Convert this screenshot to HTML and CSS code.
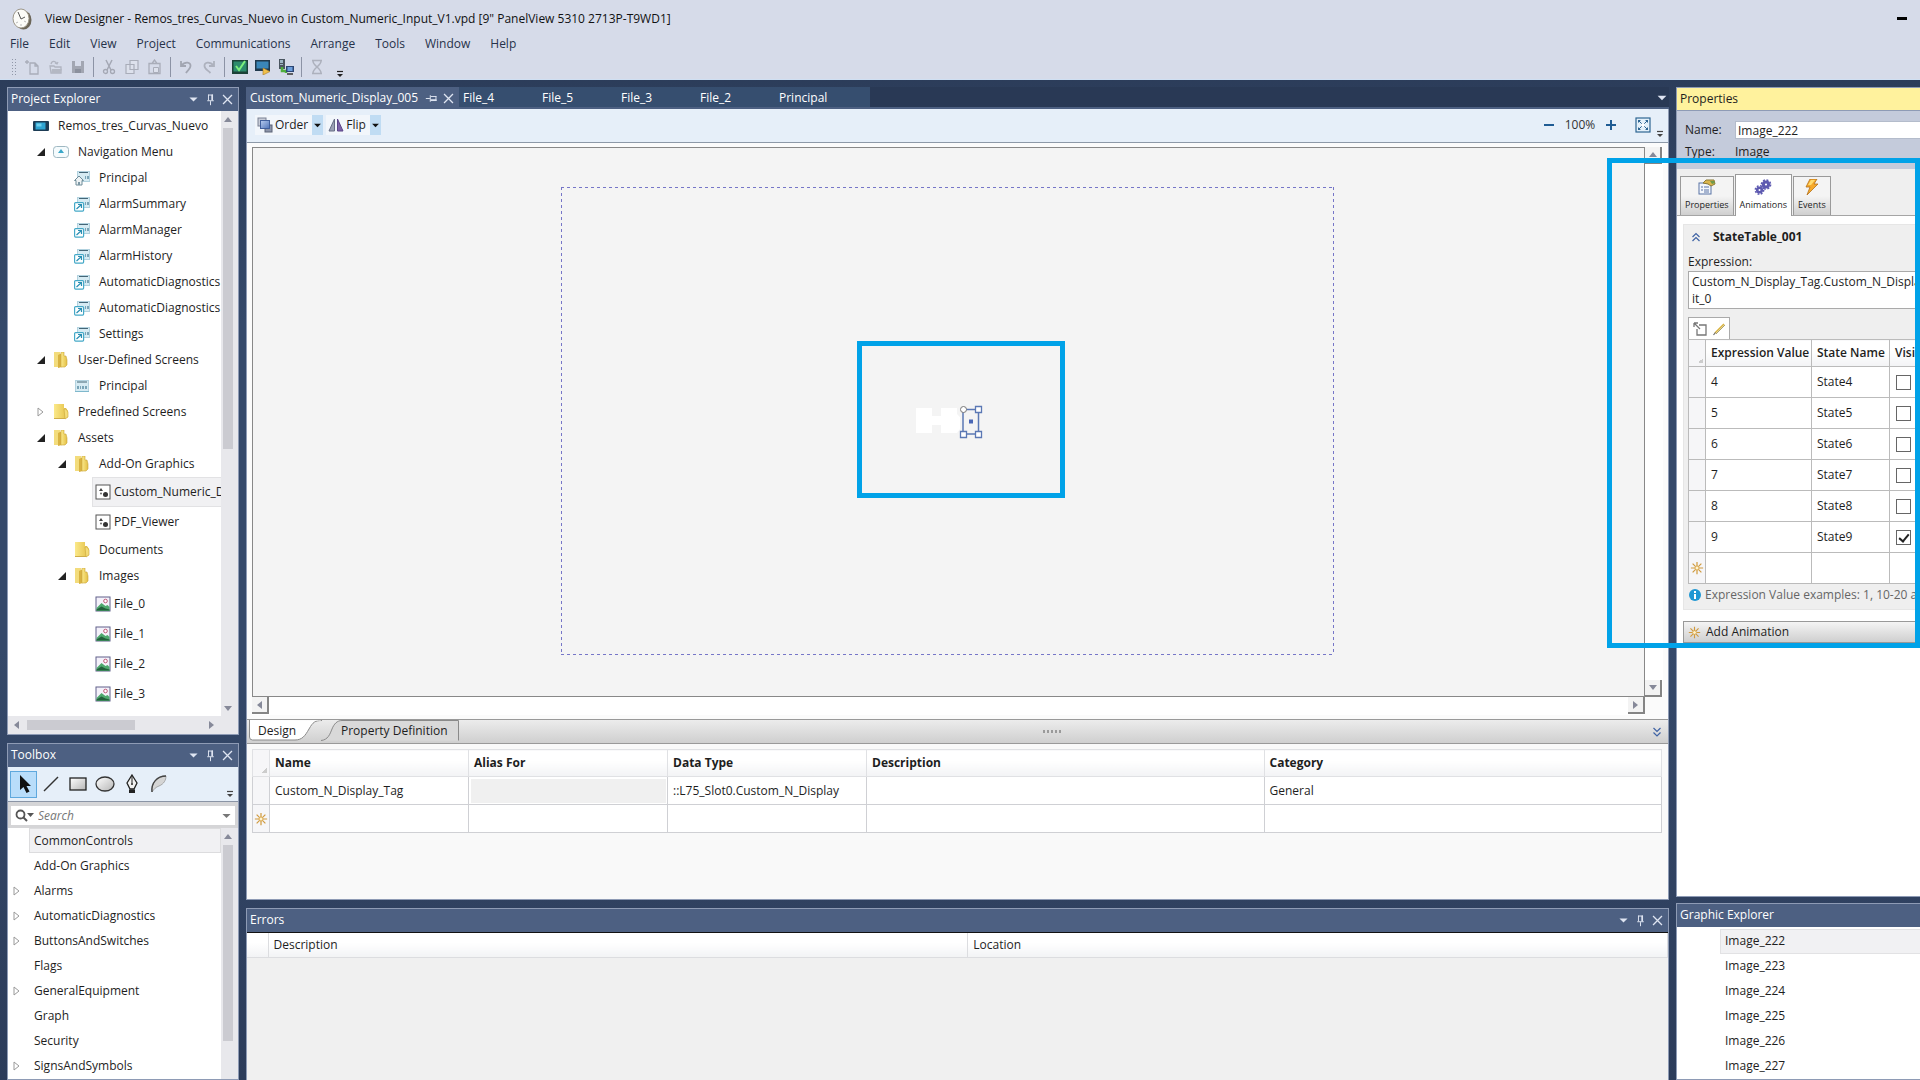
FILE: index.html
```html
<!DOCTYPE html>
<html lang="en">
<head>
<meta charset="utf-8">
<title>View Designer</title>
<link rel="stylesheet" href="styles.css">
</head>
<body>
<svg class="defs" aria-hidden="true">
  <defs>
    <linearGradient id="gFolder" x1="0" x2="1"><stop offset="0" stop-color="#fbe98a"/><stop offset="1" stop-color="#e3bf45"/></linearGradient>
    <linearGradient id="gShape" x1="0" x2="1" y1="0" y2="1"><stop offset="0" stop-color="#fff"/><stop offset="1" stop-color="#b5b5b5"/></linearGradient>
    <linearGradient id="gBlue" x1="0" x2="1" y1="0" y2="1"><stop offset="0" stop-color="#b8cdf0"/><stop offset="1" stop-color="#4f74b8"/></linearGradient>
  </defs>
  <symbol id="i-down" viewBox="0 0 16 16"><path d="M3 5.500h10l-5 5z" fill="currentColor"/></symbol>
  <symbol id="i-pin" viewBox="0 0 16 16"><path d="M5.500 2v7M10.500 2v7M5 2.500h6M4 9.500h8M8 10v5" fill="none" stroke="currentColor" stroke-width="1.200"/><path d="M9 2h2v7H9z" fill="currentColor"/></symbol>
  <symbol id="i-close" viewBox="0 0 16 16"><path d="M2.500 2.500l11 11M13.500 2.500l-11 11" stroke="currentColor" stroke-width="1.600"/></symbol>
  <symbol id="i-open" viewBox="0 0 16 16"><path d="M12 4v8H4z" fill="#222"/></symbol>
  <symbol id="i-shut" viewBox="0 0 16 16"><path d="M5 4v8l5-4z" fill="#fff" stroke="#9a9a9a"/></symbol>
  <symbol id="i-folder" viewBox="0 0 16 16"><path d="M1 0h10v4h2l2 3v6l-3 2H1z" fill="url(#gFolder)"/><path d="M11 5h2l2 3v5l-3 2z" fill="#f4dc77" stroke="#c9a63a" stroke-width=".6"/><path d="M1 14.500h11" stroke="#cfae4a"/></symbol>
  <symbol id="i-fopen" viewBox="0 0 16 16"><path d="M1 0h6v14l-2 1H1z" fill="#f3dc7c"/><path d="M5 3l4-2v14l-4 1z" fill="#d9b342"/><path d="M8 0h3v4h2l1 4v5l-2 2H8z" fill="url(#gFolder)" stroke="#c9a63a" stroke-width=".6"/></symbol>
  <symbol id="i-panel" viewBox="0 0 16 16"><rect y="3" width="16" height="10" rx="1" fill="#1d3c55"/><rect x="2.500" y="4.500" width="10" height="7" fill="#2fa5d3"/><rect x="3.500" y="5.500" width="5" height="3" fill="#6fd0ee"/></symbol>
  <symbol id="i-nav" viewBox="0 0 16 16"><rect x=".5" y="2.500" width="15" height="11" rx="3" fill="#f5fbfd" stroke="#9fb8c2"/><path d="M8 5l3 4H5z" fill="#39a7c9"/></symbol>
  <symbol id="i-screen" viewBox="0 0 16 16"><rect x="1.500" y="2.500" width="13" height="11" fill="#d6ebf3" stroke="#b2d2df"/><path d="M3 4h10" stroke="#456677"/><path d="M1 13.500h14" stroke="#7fb8cc"/><path d="M3 8h2v3H3zM6 8h1v3H6zM8 8h2v3H8zM11 8h2v3h-2z" fill="#7aa5b8"/></symbol>
  <symbol id="i-link" viewBox="0 0 16 16"><rect x="3.500" y="1.500" width="12" height="10" fill="#d6ebf3" stroke="#b2d2df"/><path d="M5 2.500h9" stroke="#456677"/><path d="M11 6h1v3h-1zM13 6h2v3h-2z" fill="#7aa5b8"/><rect x=".6" y="6.600" width="9" height="8.500" rx="1" fill="#fff" stroke="#45a9c8" stroke-width="1.200"/><path d="M2.500 13l5-4.500M4 8.500h3.500V12" fill="none" stroke="#2a8fb3" stroke-width="1.200"/></symbol>
  <symbol id="i-home" viewBox="0 0 16 16"><rect x="3.500" y="1.500" width="12" height="10" fill="#d6ebf3" stroke="#b2d2df"/><path d="M5 2.500h9" stroke="#456677"/><path d="M11 6h1v3h-1zM13 6h2v3h-2z" fill="#7aa5b8"/><path d="M.5 10.500L5 6l4.500 4.500H8V15H2v-4.500z" fill="#eef3f5" stroke="#6f8c99"/><path d="M4 12h2v3H4z" fill="#7d98a5"/></symbol>
  <symbol id="i-addon" viewBox="0 0 16 16"><rect x="1" y="1" width="14" height="14" fill="#fff" stroke="#555"/><path d="M6 4l2 3H4z" fill="#444"/><circle cx="10.500" cy="10.500" r="2.500" fill="#333"/><circle cx="6" cy="9.500" r="1" fill="#666"/></symbol>
  <symbol id="i-img" viewBox="0 0 16 16"><rect x="1" y="1" width="14" height="14" fill="#f4f1fa" stroke="#61618a"/><circle cx="10.500" cy="5" r="1.800" fill="#fff" stroke="#c05a7a"/><path d="M1.500 12l5-5 4 3 2-1 2 2V15h-13z" fill="#4ea86e"/><path d="M1.500 14.500v-1l5-3 4 2 4 1v1z" fill="#23603c"/></symbol>
  <symbol id="i-star" viewBox="0 0 16 16"><path d="M8 1v14M1 8h14M3 3l10 10M13 3L3 13" stroke="#d09a3e" stroke-width="1.400"/><circle cx="8" cy="8" r="2.300" fill="#fff3cf" stroke="#d9a74a"/></symbol>
  <symbol id="i-over" viewBox="0 0 12 12"><path d="M3 4.500h6" stroke="currentColor" stroke-width="1.200"/><path d="M3 7h6l-3 3z" fill="currentColor"/></symbol>
  <symbol id="i-up2" viewBox="0 0 12 12"><path d="M2.500 6L6 2.500 9.500 6M2.500 10L6 6.500 9.500 10" fill="none" stroke="#3f63a5" stroke-width="1.200"/></symbol>
  <symbol id="i-dn2" viewBox="0 0 12 12"><path d="M2.500 2L6 5.500 9.500 2M2.500 6.500L6 10l3.500-3.500" fill="none" stroke="#3f63a5" stroke-width="1.200"/></symbol>
</svg>

<div class="app">
  <header class="top">
    <div class="titlebar">
      <svg class="logo" viewBox="0 0 20 24"><ellipse cx="11.500" cy="13" rx="8" ry="9.500" fill="#6b6558"/><ellipse cx="9" cy="11.500" rx="8" ry="9.500" fill="#fbfbf8" stroke="#9d978a"/><path d="M9 12L6 5M9 12l4-2" stroke="#555" fill="none"/><path d="M4 16l2-1M9 19v-2M14 15l-2-1" stroke="#bbb"/></svg>
      <span class="title">View Designer - Remos_tres_Curvas_Nuevo in Custom_Numeric_Input_V1.vpd [9" PanelView 5310 2713P-T9WD1]</span>
      <button class="minimize" aria-label="Minimize"><span></span></button>
    </div>
    <nav class="menu">
      <button>File</button><button>Edit</button><button>View</button><button>Project</button><button>Communications</button><button>Arrange</button><button>Tools</button><button>Window</button><button>Help</button>
    </nav>
    <div class="tools">
      <i class="grip"></i>
      <button aria-label="New"><svg viewBox="0 0 16 16"><path d="M6 4h5l3 3v8H6zM11 4v3h3M1 3h4M3 1v4" fill="none" stroke="#a9adb9" stroke-width="1.300"/></svg></button>
      <button aria-label="Open"><svg viewBox="0 0 16 16"><path d="M3 7h4l1 1h6v6H4zM4 5c1-4 5-3 6 0M8 4l2 1 1-2" fill="none" stroke="#b0b4c0" stroke-width="1.300"/><path d="M5 10h10l-2 4H4z" fill="#b4b8c3"/></svg></button>
      <button aria-label="Save"><svg viewBox="0 0 16 16"><path d="M2 2h12v12H2z" fill="#a2a6b2"/><path d="M5 2h6v5H5z" fill="#d6dbe9"/><path d="M5 10h6v4H5z" fill="#8b909d"/></svg></button>
      <i class="sep"></i>
      <button aria-label="Cut"><svg viewBox="0 0 16 16"><path d="M5 1l5 10M11 1L6 11" stroke="#a4a8b4" stroke-width="1.500"/><circle cx="4.500" cy="12.500" r="2" fill="none" stroke="#a4a8b4" stroke-width="1.300"/><circle cx="11.500" cy="12.500" r="2" fill="none" stroke="#a4a8b4" stroke-width="1.300"/></svg></button>
      <button aria-label="Copy"><svg viewBox="0 0 16 16"><path d="M6 1.500h8v9H6zM2 5.500h8v9H2z" fill="#dde1ec" stroke="#a9adb9" stroke-width="1.200"/></svg></button>
      <button aria-label="Paste"><svg viewBox="0 0 16 16"><path d="M2 4.500h11v10H2zM5 4.500L7.500 1 10 4.500" fill="none" stroke="#a9adb9" stroke-width="1.300"/><path d="M6.500 8.500h5v5h-5z" fill="#dde1ec" stroke="#a9adb9"/></svg></button>
      <i class="sep"></i>
      <button aria-label="Undo"><svg viewBox="0 0 16 16"><path d="M3 2v5h5M3.500 6.500C7 2 13 3 12.500 7c0 3-3 4-4.500 7" fill="none" stroke="#a2a6b2" stroke-width="1.800"/></svg></button>
      <button aria-label="Redo"><svg viewBox="0 0 16 16"><path d="M13 2v5H8M12.500 6.500C9 2 3 3 3.500 7c0 3 3 4 6 7" fill="none" stroke="#adb1bd" stroke-width="1.800"/></svg></button>
      <i class="sep"></i>
      <button aria-label="Verify"><svg viewBox="0 0 16 16"><rect y="1" width="16" height="14" fill="#1c4238"/><rect x="1.500" y="2.500" width="13" height="10" fill="#2d8c6d"/><path d="M4 7l3 4 6-9" fill="none" stroke="#7df07d" stroke-width="2"/></svg></button>
      <button aria-label="Emulate"><svg viewBox="0 0 16 16"><rect y="1" width="15" height="11" fill="#20394d"/><rect x="1.500" y="2.500" width="12" height="7" fill="#3a86b8"/><path d="M8 9l7 3.500L8 16z" fill="#f0c04a" stroke="#a8792a" stroke-width=".6"/></svg></button>
      <button aria-label="Download"><svg viewBox="0 0 16 16"><path d="M1 0h6v10H1z" fill="#4a5560"/><path d="M2 1h3v3H2zM2 5h3v1H2z" fill="#9fb7c6"/><path d="M4 8v4h4v2" fill="none" stroke="#4fae3c" stroke-width="2.500"/><rect x="8" y="7" width="8" height="6" fill="#2c4674"/><rect x="9.500" y="8" width="5" height="4" fill="#6d9fdd"/><path d="M9 15h6" stroke="#333" stroke-width="1.500"/></svg></button>
      <i class="sep"></i>
      <button aria-label="Wait"><svg viewBox="0 0 16 16"><path d="M3 1.500h10M3 14.500h10M4 2c0 5 8 7 8 12M12 2c0 5-8 7-8 12" fill="none" stroke="#adb1bd" stroke-width="1.500"/></svg></button>
      <svg class="over"><use href="#i-over"/></svg>
    </div>
  </header>

  <main class="work">
    <div class="col left">
      <section class="panel explorer">
        <h2 class="head"><span>Project Explorer</span><svg><use href="#i-down"/></svg><svg><use href="#i-pin"/></svg><svg><use href="#i-close"/></svg></h2>
        <div class="scrollwrap">
          <ul class="tree">
            <li class="l0"><svg><use href="#i-panel"/></svg>Remos_tres_Curvas_Nuevo</li>
            <li class="l1"><svg class="tw"><use href="#i-open"/></svg><svg><use href="#i-nav"/></svg>Navigation Menu</li>
            <li class="l2"><svg><use href="#i-home"/></svg>Principal</li>
            <li class="l2"><svg><use href="#i-link"/></svg>AlarmSummary</li>
            <li class="l2"><svg><use href="#i-link"/></svg>AlarmManager</li>
            <li class="l2"><svg><use href="#i-link"/></svg>AlarmHistory</li>
            <li class="l2"><svg><use href="#i-link"/></svg>AutomaticDiagnostics</li>
            <li class="l2"><svg><use href="#i-link"/></svg>AutomaticDiagnostics</li>
            <li class="l2"><svg><use href="#i-link"/></svg>Settings</li>
            <li class="l1"><svg class="tw"><use href="#i-open"/></svg><svg><use href="#i-fopen"/></svg>User-Defined Screens</li>
            <li class="l2"><svg><use href="#i-screen"/></svg>Principal</li>
            <li class="l1"><svg class="tw"><use href="#i-shut"/></svg><svg><use href="#i-folder"/></svg>Predefined Screens</li>
            <li class="l1"><svg class="tw"><use href="#i-open"/></svg><svg><use href="#i-fopen"/></svg>Assets</li>
            <li class="l2"><svg class="tw"><use href="#i-open"/></svg><svg><use href="#i-fopen"/></svg>Add-On Graphics</li>
            <li class="l3"><span class="file sel"><svg><use href="#i-addon"/></svg>Custom_Numeric_D</span></li>
            <li class="l3"><span class="file"><svg><use href="#i-addon"/></svg>PDF_Viewer</span></li>
            <li class="l2"><svg><use href="#i-folder"/></svg>Documents</li>
            <li class="l2"><svg class="tw"><use href="#i-open"/></svg><svg><use href="#i-fopen"/></svg>Images</li>
            <li class="l3"><span class="file"><svg><use href="#i-img"/></svg>File_0</span></li>
            <li class="l3"><span class="file"><svg><use href="#i-img"/></svg>File_1</span></li>
            <li class="l3"><span class="file"><svg><use href="#i-img"/></svg>File_2</span></li>
            <li class="l3"><span class="file"><svg><use href="#i-img"/></svg>File_3</span></li>
          </ul>
          <div class="vbar"><i class="au"></i><b class="thumb-a"></b><i class="ad"></i></div>
        </div>
        <div class="hbar"><i class="al"></i><b></b><i class="ar"></i></div>
      </section>

      <section class="panel toolbox">
        <h2 class="head"><span>Toolbox</span><svg><use href="#i-down"/></svg><svg><use href="#i-pin"/></svg><svg><use href="#i-close"/></svg></h2>
        <div class="shapes">
          <button class="on" aria-label="Select"><svg viewBox="0 0 20 20"><path d="M6 1v15l3.500-3 3 6 3-1.500-3-5.500H17z" fill="#111"/></svg></button>
          <button aria-label="Line"><svg viewBox="0 0 20 20"><path d="M3 17L17 3" stroke="#333" stroke-width="1.400"/></svg></button>
          <button aria-label="Rectangle"><svg viewBox="0 0 20 20"><rect x="2" y="4" width="16" height="12" fill="url(#gShape)" stroke="#222" stroke-width="1.300"/></svg></button>
          <button aria-label="Ellipse"><svg viewBox="0 0 20 20"><ellipse cx="10" cy="10" rx="9" ry="7" fill="url(#gShape)" stroke="#333" stroke-width="1.300"/></svg></button>
          <button aria-label="Pen"><svg viewBox="0 0 20 20"><path d="M10 1l5 8-3 6H8L5 9z" fill="#f2f2f2" stroke="#222" stroke-width="1.300"/><path d="M10 2v7" stroke="#222"/><circle cx="10" cy="10" r="1" fill="#222"/><path d="M7 15.500h6v3.500H7z" fill="#222"/></svg></button>
          <button aria-label="Arc"><svg viewBox="0 0 20 20"><path d="M3 18C2 9 8 2 17 2c0 4-2 8-7 10-3 1-5 3-7 6z" fill="#d5d5d5" stroke="#999" stroke-width=".8"/><path d="M3 18C2 9 8 2 17 2" fill="none" stroke="#444" stroke-width="1.400"/></svg></button>
          <svg class="over"><use href="#i-over"/></svg>
        </div>
        <div class="searchrow">
          <label class="search"><svg viewBox="0 0 20 16"><circle cx="6.500" cy="6.500" r="4" fill="none" stroke="#555" stroke-width="1.800"/><path d="M9.500 9.500L13 13" stroke="#555" stroke-width="2"/><path d="M13 5h7l-3.500 4z" fill="#555"/></svg><input type="text" placeholder="Search" aria-label="Search"><svg class="drop"><use href="#i-down"/></svg></label>
        </div>
        <div class="scrollwrap">
          <ul class="cats">
            <li><span class="sel">CommonControls</span></li>
            <li><span>Add-On Graphics</span></li>
            <li><svg><use href="#i-shut"/></svg><span>Alarms</span></li>
            <li><svg><use href="#i-shut"/></svg><span>AutomaticDiagnostics</span></li>
            <li><svg><use href="#i-shut"/></svg><span>ButtonsAndSwitches</span></li>
            <li><span>Flags</span></li>
            <li><svg><use href="#i-shut"/></svg><span>GeneralEquipment</span></li>
            <li><span>Graph</span></li>
            <li><span>Security</span></li>
            <li><svg><use href="#i-shut"/></svg><span>SignsAndSymbols</span></li>
          </ul>
          <div class="vbar"><i class="au"></i><b class="thumb-b"></b></div>
        </div>
      </section>
    </div>

    <div class="col center">
      <section class="doc">
        <div class="tabs">
          <button class="tab active">Custom_Numeric_Display_005<svg class="sidepin"><use href="#i-pin"/></svg><svg><use href="#i-close"/></svg></button>
          <button class="tab">File_4</button><button class="tab">File_5</button><button class="tab">File_3</button><button class="tab">File_2</button><button class="tab last">Principal</button>
          <svg class="more"><use href="#i-down"/></svg>
        </div>
        <div class="docbar">
          <button class="cmd"><svg viewBox="0 0 16 16"><rect x="1" y="1" width="8" height="8" fill="#c9cdd8" stroke="#7a8194"/><rect x="8" y="8" width="7" height="7" fill="#8d95aa" stroke="#5b6376"/><rect x="3.500" y="3.500" width="9" height="8" fill="url(#gBlue)" stroke="#41609c"/></svg>Order</button><button class="dd" aria-label="Order options"><svg><use href="#i-down"/></svg></button>
          <button class="cmd"><svg viewBox="0 0 16 16"><path d="M6.500 2v12H1z" fill="#9aa0b4" stroke="#666d84"/><path d="M9.500 2v12H15z" fill="#7c63a8" stroke="#5b4488"/></svg>Flip</button><button class="dd" aria-label="Flip options"><svg><use href="#i-down"/></svg></button>
          <span class="grow"></span>
          <button class="zoom" aria-label="Zoom out"><svg viewBox="0 0 16 16"><path d="M3 8h10" stroke="#1f5c94" stroke-width="2"/></svg></button>
          <span class="pct">100%</span>
          <button class="zoom" aria-label="Zoom in"><svg viewBox="0 0 16 16"><path d="M3 8h10M8 3v10" stroke="#1f5c94" stroke-width="2"/></svg></button>
          <button class="zoom fit" aria-label="Fit"><svg viewBox="0 0 16 16"><rect x="1" y="1" width="14" height="14" fill="#e3f0fa" stroke="#2d6592" stroke-width="1.200"/><path d="M3 3h3L3 6zM13 3v3l-3-3zM3 13v-3l3 3zM13 13h-3l3-3z" fill="#2d6592"/><path d="M4 4l3 3M12 4L9 7M4 12l3-3M12 12L9 9" stroke="#2d6592"/><path d="M6.500 6.500h3v3h-3z" fill="#fff"/></svg></button>
          <svg class="over"><use href="#i-over"/></svg>
        </div>
        <div class="viewport">
          <div class="canvas">
            <div class="surface">
              <svg class="objects" viewBox="0 0 773 468">
                <path d="M355 221h16v8h9v-8h16v6l3 3v12l-3 4h-16v-8h-9v8h-16z" fill="#fff"/>
                <path d="M402 222.500h15.500V247H402z" fill="none" stroke="#5b78b4" stroke-width="1.500"/>
                <circle cx="402.500" cy="222.500" r="3" fill="#fff" stroke="#777"/>
                <path d="M414.500 219.500h6v6h-6zM399.500 244.500h6v6h-6zM414.500 244.500h6v6h-6z" fill="#fff" stroke="#5b78b4" stroke-width="1.300"/>
                <path d="M408 232.500h4v4h-4z" fill="#4a67b5"/>
              </svg>
              <div class="mark inner"></div>
            </div>
          </div>
          <div class="track v"><button aria-label="Scroll up"><i class="au"></i></button><button aria-label="Scroll down"><i class="ad"></i></button></div>
          <div class="track h"><button aria-label="Scroll left"><i class="al"></i></button><button aria-label="Scroll right"><i class="ar"></i></button></div>
        </div>
        <div class="split">
          <button class="stab design"><svg viewBox="0 0 76 21"><path d="M.5 0v17q0 3 3 3H46c7 0 10-4 14-11S66 .5 73 .5" fill="#fff" stroke="#8a8a8a"/><path d="M1 0h71" stroke="#fff"/></svg><span>Design</span></button>
          <button class="stab propdef"><svg viewBox="0 0 138 21"><path d="M0 20.500C7 20 9 14 11 9S16 .5 21 .5h116.500v20" fill="#d9d9d9" stroke="#8a8a8a"/></svg><span>Property Definition</span></button>
          <span class="dots"><i></i><i></i><i></i><i></i><i></i></span>
          <svg class="chev"><use href="#i-dn2"/></svg>
        </div>
        <div class="gridwrap">
          <table class="tags">
            <thead><tr><th class="rh corner"></th><th class="w2">Name</th><th class="w2">Alias For</th><th class="w2">Data Type</th><th class="w4">Description</th><th class="w4">Category</th></tr></thead>
            <tbody>
              <tr><td class="rh"></td><td>Custom_N_Display_Tag</td><td class="off"></td><td>::L75_Slot0.Custom_N_Display</td><td></td><td>General</td></tr>
              <tr><td class="rh"><svg><use href="#i-star"/></svg></td><td></td><td></td><td></td><td></td><td></td></tr>
            </tbody>
          </table>
        </div>
      </section>

      <section class="panel errors">
        <h2 class="head"><span>Errors</span><svg><use href="#i-down"/></svg><svg><use href="#i-pin"/></svg><svg><use href="#i-close"/></svg></h2>
        <table class="errs"><thead><tr><th class="rh"></th><th>Description</th><th>Location</th></tr></thead></table>
      </section>
    </div>

    <div class="col right">
      <section class="panel props">
        <h2 class="head focus"><span>Properties</span></h2>
        <div class="ident">
          <label for="nm">Name:</label><input id="nm" type="text" value="Image_222">
          <span>Type:</span><span>Image</span>
        </div>
        <div class="ptabs">
          <button><svg viewBox="0 0 18 16"><rect x="1" y="4" width="12" height="11" fill="#f4f7fc" stroke="#5873a4"/><path d="M3 8h2M3 11h2M6 8h5M6 11h5M6 13h5" stroke="#5873a4"/><path d="M5 4l3-3h8l1 4-4 2-3-2z" fill="#dcb64c" stroke="#8b7a37"/><path d="M12 2h4l1 2-3 1z" fill="#6e9a4b"/></svg>Properties</button>
          <button class="on"><svg viewBox="0 0 18 16"><circle cx="12" cy="5.500" r="2.600" fill="none" stroke="#5d59b0" stroke-width="3"/><circle cx="12" cy="5.500" r="4.600" fill="none" stroke="#5d59b0" stroke-width="1.500" stroke-dasharray="2 1.600"/><circle cx="5.500" cy="11" r="2.300" fill="none" stroke="#5d59b0" stroke-width="2.600"/><circle cx="5.500" cy="11" r="4.200" fill="none" stroke="#5d59b0" stroke-width="1.500" stroke-dasharray="1.800 1.500"/></svg>Animations</button>
          <button><svg viewBox="0 0 18 16"><path d="M7 0h7l-3 5h4L4 16l3-8H3z" fill="#f6a92a" stroke="#b3701c" stroke-width=".8"/><path d="M8 1h4L8 6H5z" fill="#ffdc70"/></svg>Events</button>
        </div>
        <div class="pbody">
          <div class="state">
            <h3><svg><use href="#i-up2"/></svg>StateTable_001</h3>
            <label for="ex">Expression:</label>
            <textarea id="ex" rows="2" wrap="off">Custom_N_Display_Tag.Custom_N_Displa
it_0</textarea>
            <div class="mini">
              <button aria-label="Expand"><svg viewBox="0 0 14 14"><path d="M6 3h7v10H4V7" fill="none" stroke="#777" stroke-width="1.300"/><path d="M1 1h4M1 1v4M1 1l6 6" fill="none" stroke="#777" stroke-width="1.300"/></svg></button>
              <button aria-label="Edit"><svg viewBox="0 0 14 14"><path d="M3 11L12 2" stroke="#d8b23c" stroke-width="1.600"/><path d="M1.500 13l2-2.500" stroke="#666" stroke-width="1.200"/><path d="M4 12L13 3" stroke="#8a7b35" stroke-width=".7"/></svg></button>
            </div>
            <table class="states">
              <thead><tr><th class="rh corner"></th><th>Expression Value</th><th>State Name</th><th>Visi</th></tr></thead>
              <tbody>
                <tr><td class="rh"></td><td>4</td><td>State4</td><td><input type="checkbox" aria-label="State4 visible"></td></tr>
                <tr><td class="rh"></td><td>5</td><td>State5</td><td><input type="checkbox" aria-label="State5 visible"></td></tr>
                <tr><td class="rh"></td><td>6</td><td>State6</td><td><input type="checkbox" aria-label="State6 visible"></td></tr>
                <tr><td class="rh"></td><td>7</td><td>State7</td><td><input type="checkbox" aria-label="State7 visible"></td></tr>
                <tr><td class="rh"></td><td>8</td><td>State8</td><td><input type="checkbox" aria-label="State8 visible"></td></tr>
                <tr><td class="rh"></td><td>9</td><td>State9</td><td><input type="checkbox" checked aria-label="State9 visible"></td></tr>
                <tr><td class="rh"><svg><use href="#i-star"/></svg></td><td></td><td></td><td></td></tr>
              </tbody>
            </table>
            <p class="hint"><svg viewBox="0 0 14 14"><circle cx="7" cy="7" r="6" fill="#1f97d3"/><path d="M7 6v5M7 3v2" stroke="#fff" stroke-width="2"/></svg>Expression Value examples: 1, 10-20 an</p>
          </div>
          <button class="add"><svg><use href="#i-star"/></svg>Add Animation</button>
        </div>
      </section>
      <section class="panel graphic">
        <h2 class="head"><span>Graphic Explorer</span></h2>
        <ul class="gfx"><li class="sel">Image_222</li><li>Image_223</li><li>Image_224</li><li>Image_225</li><li>Image_226</li><li>Image_227</li></ul>
      </section>
      <div class="mark outer"></div>
    </div>
  </main>
</div>
</body>
</html>
```
FILE: styles.css
```css
* { box-sizing: border-box; }
html, body { margin: 0; height: 100%; }
body { font: 12px/16px "Open Sans", "Noto Sans", sans-serif; color: #1e1e1e; overflow: hidden; }
button, input, textarea { font: inherit; color: inherit; margin: 0; border-radius: 0; }
button { background: none; border: 0; padding: 0; }
ul, h2, h3, p { margin: 0; padding: 0; list-style: none; font-size: 12px; font-weight: 400; }
svg { width: 16px; height: 16px; flex: none; display: block; }
.defs { position: absolute; width: 0; height: 0; }
table { border-collapse: collapse; table-layout: fixed; }
th { text-align: left; }

.app { height: 100vh; display: flex; flex-direction: column; background: linear-gradient(#293955, #35496a 30%, #35496a 60%, #2c3c5a); }

/* title, menu and main toolbar */
.top { height: 80px; background: #d6dbe9; border-bottom: 1px solid #cfdff2; }
.titlebar { display: flex; align-items: center; height: 33px; padding: 4px 12px 0; gap: 13px; }
.logo { width: 20px; height: 24px; }
.title { flex: 1; white-space: nowrap; color: #111; }
.minimize { width: 12px; height: 16px; display: grid; place-items: center; }
.minimize span { width: 10px; height: 3px; background: #000; }
.menu { display: flex; align-items: center; gap: 20px; height: 21px; padding-left: 10px; color: #26324a; }
.tools { display: flex; align-items: center; gap: 7px; height: 25px; padding-left: 11px; }
.tools .over { width: 12px; height: 12px; align-self: flex-end; color: #222; margin-left: 2px; }
.grip { width: 6px; height: 18px; background: radial-gradient(circle, #9097a8 1px, transparent 1px) 0 0/3px 3px; }
.sep { width: 1px; height: 20px; background: #8c93a5; }

/* work area */
.work { flex: 1; min-height: 0; display: grid; grid-template-columns: 232px minmax(0, 1fr) 244px; gap: 7px; padding: 7px 0 0 7px; }
.col { display: flex; flex-direction: column; gap: 8px; min-height: 0; min-width: 0; }
.panel { display: flex; flex-direction: column; border: 1px solid #8e9bb5; background: #fff; min-height: 0; overflow: hidden; }
.head { display: flex; align-items: center; height: 23px; flex: none; padding: 0 4px 1px 3px; background: #4d6082; color: #fff; }
.head span { flex: 1; }
.head svg { width: 13px; height: 13px; margin-left: 4px; color: #dfe5f2; }
.head.focus { background: #fff29d; color: #1e1e1e; border-bottom: 1px solid #8e9bb5; padding-bottom: 0; }
.sel { background: #f1f1f3; border: 1px solid #e2e2e4; border-right: 0; }

.explorer { flex: 0 1 648px; }
.toolbox { flex: 1; }
.scrollwrap { flex: 1; min-height: 0; display: flex; }
.tree, .cats { flex: 1; min-width: 0; overflow: hidden; }
.tree { padding-top: 2px; }
.tree li { display: flex; align-items: center; height: 26px; white-space: nowrap; gap: 9px; }
.tree .l0 { padding-left: 25px; }
.tree .l1 { padding-left: 45px; }
.tree .l2 { padding-left: 66px; }
.tree .l3 { padding-left: 84px; height: 30px; }
.tree .tw { margin-left: -20px; margin-right: -5px; }
.file { display: flex; flex: 1; align-items: center; gap: 3px; height: 30px; padding-left: 2px; border: 1px solid transparent; }
.file.sel { border-color: #e2e2e4; }
.vbar { width: 17px; flex: none; padding: 6px 3px 5px 0; background: #e8e8ec; display: flex; flex-direction: column; align-items: center; }
.vbar b { width: 10px; background: #cbcbd1; }
.vbar .thumb-a { height: 321px; margin: 6px 0 auto; }
.vbar .thumb-b { height: 196px; margin: 6px 0 auto; }
.hbar { display: flex; align-items: center; height: 18px; padding: 0 24px 0 6px; background: #e8e8ec; }
.hbar b { height: 10px; width: 108px; margin: 0 auto 0 8px; background: #cbcbd1; }
.au, .ad, .al, .ar { width: 0; height: 0; border: 4px solid transparent; flex: none; }
.au { border-top: 0; border-bottom: 5px solid #868999; }
.ad { border-bottom: 0; border-top: 5px solid #868999; }
.al { border-left: 0; border-right: 5px solid #868999; }
.ar { border-right: 0; border-left: 5px solid #868999; }

.shapes { display: flex; align-items: center; height: 35px; flex: none; padding: 0 2px; background: #e6eff9; border-bottom: 1px solid #8a94a5; }
.shapes button { width: 27px; height: 27px; display: grid; place-items: center; border: 1px solid transparent; }
.shapes .on { background: #b9ddfa; border-color: #5fa8dd; }
.shapes svg { width: 20px; height: 20px; }
.shapes .over { width: 12px; height: 12px; margin: 0 0 2px auto; align-self: flex-end; color: #444; }
.searchrow { height: 26px; flex: none; padding: 4px 3px; background: #d5d5d7; }
.search { display: flex; align-items: center; height: 19px; background: #fff; padding: 0 2px 0 3px; gap: 4px; }
.search svg { width: 20px; }
.search .drop { width: 13px; color: #777; }
.search input { flex: 1; min-width: 0; height: 18px; border: 0; padding: 0; font-style: italic; background: transparent; outline: 0; }
.search input::placeholder { color: #777; }
.cats li { display: flex; justify-content: flex-end; align-items: center; height: 25px; }
.cats svg { width: 16px; margin-right: 4px; }
.cats span { width: 192px; height: 25px; line-height: 23px; padding-left: 4px; border: 1px solid transparent; }
.cats .sel { border-color: #dcdcde; }

/* document */
.doc { flex: 1; min-height: 0; display: flex; flex-direction: column; border: 1px solid #8e9bb5; border-top: 0; background: #fff; }
.tabs { display: flex; height: 22px; flex: none; background: #293955; border-bottom: 2px solid #4d6082; margin: 0 -1px; }
.tab { width: 79px; background: #364e6f; color: #fff; text-align: left; padding: 2px 0 0 4px; white-space: nowrap; }
.tab.active { width: 213px; display: flex; align-items: center; background: #4d6082; }
.tab.active svg { width: 13px; height: 13px; color: #dfe5f2; margin-right: 4px; }
.tab.active .sidepin { margin-left: auto; transform: rotate(90deg); }
.tab.last { width: 95px; }
.more { width: 14px; margin: 3px 0 0 auto; color: #dfe5f2; }
.docbar { display: flex; align-items: center; height: 34px; flex: none; padding: 0 2px 1px 8px; background: #e6eff9; border-bottom: 1px solid #8d99a8; }
.cmd { display: flex; align-items: center; gap: 2px; height: 20px; padding: 0 4px 0 2px; background: #f2f6fb; }
.dd { width: 11px; height: 20px; margin-right: 3px; background: #c0dcf3; }
.dd svg { width: 11px; height: 11px; color: #111; }
.grow { flex: 1; }
.pct { width: 46px; text-align: center; color: #333; }
.fit { margin-left: 16px; }
.docbar .over { width: 12px; height: 12px; align-self: flex-end; margin: 0 0 2px 3px; color: #444; }

.viewport { flex: 1; min-height: 0; display: grid; grid-template: minmax(0, 1fr) 18px / minmax(0, 1fr) 18px; padding: 4px 5px 4px 5px; background: #fbfbfb; }
.canvas { display: grid; place-items: center; background: #f4f4f4; border: 1px solid #888; padding: 0 3px 3px 0; overflow: hidden; }
.surface { position: relative; width: 773px; height: 468px; background: linear-gradient(90deg, #7676c8 50%, transparent 0) 0 0/6px 1px repeat-x, linear-gradient(90deg, #7676c8 50%, transparent 0) 0 100%/6px 1px repeat-x, linear-gradient(#7676c8 50%, transparent 0) 0 0/1px 6px repeat-y, linear-gradient(#7676c8 50%, transparent 0) 100% 0/1px 6px repeat-y; }
.objects { width: 100%; height: 100%; }
.mark { position: absolute; border: 5px solid #00a2e8; pointer-events: none; }
.inner { left: 296px; top: 154px; width: 208px; height: 157px; }
.track { display: flex; justify-content: space-between; background: #fff; }
.track.v { flex-direction: column; }
.track button { width: 17px; height: 17px; display: grid; place-items: center; background: #f3f3f3; border: solid #858585; border-width: 0 2px 2px 0; }

.split { display: flex; height: 25px; flex: none; padding-left: 2px; background: linear-gradient(#ececec, #cfcfcf); border: solid #999; border-width: 1px 0; }
.stab { display: grid; height: 21px; text-align: left; }
.stab svg, .stab span { grid-area: 1 / 1; }
.stab span { padding-top: 3px; }
.design svg { width: 76px; height: 21px; }
.design span { padding-left: 9px; }
.propdef { margin-left: -4px; }
.propdef svg { width: 138px; height: 21px; }
.propdef span { padding-left: 20px; }
.dots { display: flex; flex: 1; justify-content: center; gap: 2px; margin: auto; padding-right: 2px; }
.dots i { width: 2px; height: 3px; background: #9a9a9a; }
.chev { width: 12px; height: 12px; margin: 6px 5px; }
.gridwrap { height: 155px; flex: none; padding: 5px 6px 0 5px; background: #f9f9f9; }
.tags { width: 100%; background: #fff; border: 1px solid #c8c8cb; }
.tags th, .tags td { border: 1px solid #cfd0d4; padding: 0 5px; height: 28px; white-space: nowrap; }
.tags th { height: 27px; font-weight: 700; background: linear-gradient(#fff 40%, #f2f3f5); border-color: #e0e1e4; }
.tags .rh, .states .rh { width: 17px; padding: 0 1px; background: #f6f6f8; }
.rh svg { width: 14px; height: 14px; }
.corner { position: relative; }
.corner::after { content: ""; position: absolute; right: 2px; bottom: 3px; width: 5px; height: 5px; background: linear-gradient(135deg, transparent 50%, #ccc 50%); }
.tags .w2 { width: 199px; }
.tags .off { background: #f0f0f0; background-clip: content-box; padding: 2px; }

.errors { height: 172px; flex: none; background: #f0f0f0; border-bottom: 0; }
.errors .head { border-bottom: 1px solid #111; height: 24px; }
.errs { width: 100%; }
.errs th { height: 24px; padding: 0 5px; font-weight: 400; background: linear-gradient(#fff 40%, #f2f3f5); border: solid #dcdde0; border-width: 0 1px 1px 0; }
.errs .rh { width: 21px; }

/* properties */
.right { position: relative; gap: 6px; }
.outer { left: -69px; right: 0; top: 71px; height: 490px; }
.props { flex: 1; border-right: 0; }
.graphic { height: 177px; flex: none; border-right: 0; }
.ident { display: grid; grid-template-columns: 50px 1fr; align-content: start; align-items: center; height: 58px; flex: none; padding: 10px 0 0 8px; row-gap: 5px; background: #c4cbdb; }
.ident input { width: 100%; height: 18px; padding: 0 2px; background: #fff; border: 1px solid #b4bccb; border-right: 0; }
.ptabs { display: flex; align-items: flex-end; height: 47px; flex: none; padding: 0 0 0 3px; gap: 1px; background: #efefef; border-bottom: 1px solid #a5a5a5; }
.ptabs button { display: flex; flex-direction: column; align-items: center; gap: 2px; height: 39px; padding: 2px 4px 0; font-size: 9px; line-height: 16px; background: linear-gradient(#f4f4f4 50%, #cfcfcf); border: 1px solid #9a9a9a; border-bottom: 0; }
.ptabs .on { height: 42px; padding-top: 4px; margin-bottom: -1px; background: #fff; }
.ptabs svg { width: 18px; height: 16px; }
.pbody { flex: 1; overflow: hidden; padding: 8px 0 0 6px; }
.state { padding: 2px 0 4px 4px; background: #efefef; height: 386px; border: 1px solid #e6e6e6; border-right: 0; }
.state h3 { display: flex; align-items: center; gap: 11px; height: 20px; padding-left: 2px; font-weight: 700; }
.state h3 svg { width: 12px; height: 12px; }
.state label { display: block; margin-top: 7px; height: 17px; }
.state textarea { display: block; width: 100%; height: 38px; padding: 1px 3px; line-height: 17px; border: 1px solid #aaa; border-right: 0; resize: none; overflow: hidden; white-space: pre; background: #fff; }
.mini { display: flex; align-items: center; gap: 5px; width: 42px; height: 22px; margin-top: 8px; padding: 0 4px; background: #fff; border: 1px solid #aaa; border-bottom: 0; }
.mini svg { width: 14px; height: 14px; }
.states { width: 100%; background: #fff; border-left: 1px solid #aaa; }
.states th, .states td { border: 1px solid #bbb; border-right: 0; padding: 0 0 0 5px; height: 31px; white-space: nowrap; }
.states th { height: 27px; font-weight: 600; background: linear-gradient(#fff 40%, #f2f3f5); overflow: hidden; }
.states th:nth-child(2) { width: 106px; }
.states th:nth-child(3) { width: 78px; }
.states input { appearance: none; display: grid; place-items: center; width: 15px; height: 15px; margin-left: 1px; border: 1px solid #666; background: #fff; }
.states input:checked::before { content: ""; width: 4px; height: 8px; border: solid #222; border-width: 0 2px 2px 0; transform: rotate(40deg); }
.hint { display: flex; align-items: center; gap: 3px; height: 22px; color: #666; white-space: nowrap; }
.hint svg { width: 14px; height: 14px; }
.add { display: flex; align-items: center; gap: 5px; width: 100%; height: 22px; margin-top: 11px; padding-left: 4px; background: linear-gradient(#f4f4f4, #cfcfcf); border: 1px solid #999; border-right: 0; }
.add svg { width: 13px; height: 13px; }
.gfx { padding: 2px 0 0 43px; }
.gfx li { height: 25px; padding: 4px 5px; }
.gfx .sel { padding: 3px 4px; }
```
